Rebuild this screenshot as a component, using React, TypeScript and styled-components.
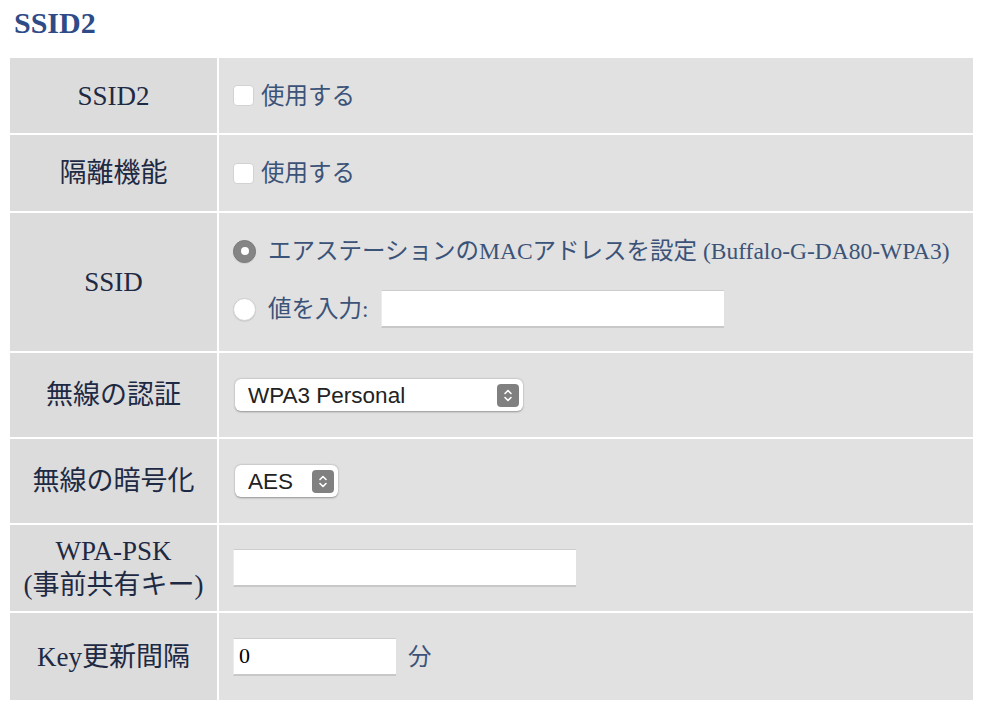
import { createGlobalStyle } from "styled-components";
import styled from "styled-components";

const GlobalStyle = createGlobalStyle`
  body {
    margin: 0;
    background: #ffffff;
    font-family: "Liberation Serif", "Noto Sans CJK JP", serif;
  }
`;

const Page = styled.div`
  padding: 5px 8px 10px 8px;
`;

const Heading = styled.h2`
  margin: 0 0 15px 6px;
  font-size: 30px;
  line-height: 36px;
  font-weight: 700;
  color: #2e4b87;
`;

const SettingsTable = styled.table`
  width: 967px;
  border-spacing: 2px;
  border-collapse: separate;
`;

const LabelCell = styled.th<{ $h: number }>`
  width: 207px;
  height: ${(p) => p.$h}px;
  padding: 0;
  background: #dcdcdc;
  color: #1e2a44;
  font-size: 27px;
  font-weight: 400;
  line-height: 34px;
  text-align: center;
  vertical-align: middle;
`;

const ValueCell = styled.td`
  padding: 0 0 0 14px;
  background: #e1e1e1;
  color: #3b5378;
  font-size: 23.5px;
  vertical-align: middle;
`;

const Line = styled.label<{ $gap?: number }>`
  display: flex;
  align-items: center;
  gap: ${(p) => p.$gap ?? 7}px;
  line-height: 30px;
`;

const Stack = styled.div`
  display: flex;
  flex-direction: column;
  gap: 24px;
`;

const CheckBox = styled.span`
  width: 21px;
  height: 21px;
  box-sizing: border-box;
  background: #ffffff;
  border: 1px solid #d2d2d2;
  border-radius: 4px;
  flex-shrink: 0;
`;

const Radio = styled.span<{ $on?: boolean }>`
  width: 23px;
  height: 23px;
  box-sizing: border-box;
  border-radius: 50%;
  flex-shrink: 0;
  display: flex;
  align-items: center;
  justify-content: center;
  background: ${(p) => (p.$on ? "#858585" : "#ffffff")};
  border: 1px solid ${(p) => (p.$on ? "#7a7a7a" : "#cfcfcf")};
  box-shadow: 0 0.5px 1px rgba(0, 0, 0, 0.12);
  &::after {
    content: "";
    display: ${(p) => (p.$on ? "block" : "none")};
    width: 8px;
    height: 8px;
    border-radius: 50%;
    background: #ffffff;
  }
`;

const TextInput = styled.input<{ $w: number }>`
  width: ${(p) => p.$w}px;
  height: 38px;
  box-sizing: border-box;
  padding: 0 5px;
  margin: 0;
  background: #ffffff;
  border: none;
  border-left: 1px solid #ececec;
  border-top: 1px solid #cdcdcd;
  border-bottom: 2px solid #c8c8c8;
  font-family: "Liberation Serif", serif;
  font-size: 22px;
  color: #000000;
  outline: none;
`;

const SelectWrap = styled.div<{ $w: number }>`
  position: relative;
  width: ${(p) => p.$w}px;
  height: 32px;
  margin-left: 2px;
`;

const Select = styled.select`
  appearance: none;
  width: 100%;
  height: 100%;
  margin: 0;
  padding: 0 0 0 13px;
  border: none;
  border-radius: 6px;
  background: #ffffff;
  box-shadow: 0 0.5px 2px rgba(0, 0, 0, 0.35);
  font-family: "Liberation Sans", Arial, sans-serif;
  font-size: 22.5px;
  color: #222222;
  outline: none;
`;

const SelectArrow = styled.span`
  position: absolute;
  right: 4px;
  top: 5px;
  width: 22px;
  height: 23px;
  border-radius: 4px;
  background: #808080;
  display: flex;
  align-items: center;
  justify-content: center;
  pointer-events: none;
`;

const Unit = styled.span`
  margin-left: 5px;
`;

const Arrows = () => (
  <svg width="10" height="15" viewBox="0 0 10 15">
    <path
      d="M2 5.5 L5 2.5 L8 5.5 M2 9.5 L5 12.5 L8 9.5"
      fill="none"
      stroke="#ffffff"
      strokeWidth="1.6"
      strokeLinecap="round"
      strokeLinejoin="round"
    />
  </svg>
);

const App = () => {
  return (
    <Page>
      <GlobalStyle />
      <Heading>SSID2</Heading>
      <SettingsTable>
        <tbody>
          <tr>
            <LabelCell $h={75}>SSID2</LabelCell>
            <ValueCell>
              <Line>
                <CheckBox />
                使用する
              </Line>
            </ValueCell>
          </tr>
          <tr>
            <LabelCell $h={76}>隔離機能</LabelCell>
            <ValueCell>
              <Line>
                <CheckBox />
                使用する
              </Line>
            </ValueCell>
          </tr>
          <tr>
            <LabelCell $h={138}>SSID</LabelCell>
            <ValueCell>
              <Stack>
                <Line $gap={12}>
                  <Radio $on />
                  エアステーションのMACアドレスを設定 (Buffalo-G-DA80-WPA3)
                </Line>
                <Line $gap={12}>
                  <Radio />
                  値を入力:
                  <TextInput $w={343} type="text" />
                </Line>
              </Stack>
            </ValueCell>
          </tr>
          <tr>
            <LabelCell $h={84}>無線の認証</LabelCell>
            <ValueCell>
              <SelectWrap $w={288}>
                <Select defaultValue="wpa3">
                  <option value="wpa3">WPA3 Personal</option>
                </Select>
                <SelectArrow>
                  <Arrows />
                </SelectArrow>
              </SelectWrap>
            </ValueCell>
          </tr>
          <tr>
            <LabelCell $h={84}>無線の暗号化</LabelCell>
            <ValueCell>
              <SelectWrap $w={103}>
                <Select defaultValue="aes">
                  <option value="aes">AES</option>
                </Select>
                <SelectArrow>
                  <Arrows />
                </SelectArrow>
              </SelectWrap>
            </ValueCell>
          </tr>
          <tr>
            <LabelCell $h={86}>
              WPA-PSK
              <br />
              (事前共有キー)
            </LabelCell>
            <ValueCell>
              <TextInput $w={343} type="password" />
            </ValueCell>
          </tr>
          <tr>
            <LabelCell $h={87}>Key更新間隔</LabelCell>
            <ValueCell>
              <Line>
                <TextInput $w={163} type="text" defaultValue="0" />
                <Unit>分</Unit>
              </Line>
            </ValueCell>
          </tr>
        </tbody>
      </SettingsTable>
    </Page>
  );
};

export default App;
